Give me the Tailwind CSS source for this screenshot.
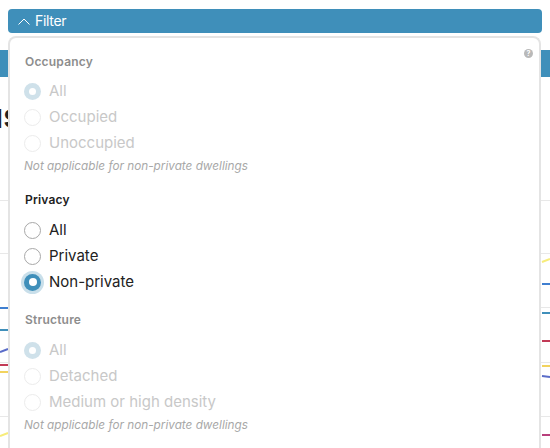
<!DOCTYPE html>
<html lang="en">
<head>
    <meta charset="UTF-8">
    <title>Filter</title>
    <script src="https://cdn.jsdelivr.net/npm/@tailwindcss/browser@4"></script>
</head>
<body class="bg-white font-['Inter',sans-serif] h-[448px] overflow-hidden relative">

    <!-- page behind the popover -->
    <div class="absolute left-0 right-0 top-[50px] h-[27px] bg-[#3f8fba]"></div>
    <div class="absolute left-[-18px] top-[96px] text-[34px] font-bold text-[#222] leading-10">us</div>
    <svg class="absolute left-0 top-0" width="550" height="448" fill="none" stroke-width="2">
        <g stroke="#e8e8e8" stroke-width="1">
            <path d="M0 200.500H550M0 253.500H550M0 307.500H550M0 362.500H550M0 416.500H550"/>
        </g>
        <path d="M0 308H8M542 284H550" stroke="#3f7fd0"/>
        <path d="M0 330H8M542 313H550" stroke="#3f8fba"/>
        <path d="M0 352L8 349M542 376L550 377" stroke="#5a6cc8"/>
        <path d="M0 365H8M542 341H550" stroke="#c23a56"/>
        <path d="M0 372H8M542 366H550" stroke="#f2d35e"/>
        <path d="M0 436L8 433M542 262L550 259" stroke="#f7ec7a"/>
        <path d="M542 435H550" stroke="#b83f7c"/>
    </svg>

    <!-- filter toggle -->
    <div class="relative mx-2 mt-[9px] h-6 w-[534px] rounded bg-[#3f8fba] flex items-center pl-2.5 gap-[5px] text-white text-sm tracking-[-0.3px]">
        <svg width="12" height="7" viewBox="0 0 12 7" fill="none" stroke="white" stroke-width="1"><path d="M0.500 6.500L6 1L11.500 6.500"/></svg>
        <span>Filter</span>
    </div>

    <!-- popover -->
    <div class="relative ml-2 mt-[3px] w-[533px] h-[430px] bg-white border-2 border-[#e4e4e4] border-b-0 rounded-t-lg pl-[14px] pt-4">
        <div class="absolute top-[11px] right-[6px] w-[9px] h-[9px] rounded-full bg-[#b9b9b9] text-white text-[7px] font-bold leading-[9px] text-center">?</div>

        <div>
            <h3 class="ml-px text-xs font-semibold leading-4 tracking-[0.2px] text-[#8d8d8d]">Occupancy</h3>
            <div class="mt-2 flex flex-col text-[15px] leading-[26px] text-[#c8c8c8]">
                <label class="flex items-center gap-2 h-[26px]"><span class="w-[17px] h-[17px] rounded-full bg-[#cfe1ea] flex items-center justify-center"><span class="w-[7px] h-[7px] rounded-full bg-white"></span></span>All</label>
                <label class="flex items-center gap-2 h-[26px]"><span class="w-[17px] h-[17px] rounded-full border border-[#ececec]"></span>Occupied</label>
                <label class="flex items-center gap-2 h-[26px]"><span class="w-[17px] h-[17px] rounded-full border border-[#ececec]"></span>Unoccupied</label>
            </div>
            <p class="mt-[2px] text-[11.75px] italic leading-4 text-[#a8a8a8]">Not applicable for non-private dwellings</p>
        </div>

        <div class="mt-[18px]">
            <h3 class="ml-px text-xs font-semibold leading-4 tracking-[0.2px] text-[#222]">Privacy</h3>
            <div class="mt-[9px] flex flex-col text-[15px] leading-[26px] text-[#222]">
                <label class="flex items-center gap-2 h-[26px]"><span class="w-[17px] h-[17px] rounded-full border border-[#a8a8a8]"></span>All</label>
                <label class="flex items-center gap-2 h-[26px]"><span class="w-[17px] h-[17px] rounded-full border border-[#a8a8a8]"></span>Private</label>
                <label class="flex items-center gap-2 h-[26px]"><span class="w-[17px] h-[17px] rounded-full bg-[#3f8fba] ring-[3px] ring-[#c9dfea] flex items-center justify-center"><span class="w-2 h-2 rounded-full bg-white"></span></span>Non-private</label>
            </div>
        </div>

        <div class="mt-[17px]">
            <h3 class="ml-px text-xs font-semibold leading-4 tracking-[0.2px] text-[#8d8d8d]">Structure</h3>
            <div class="mt-[9px] flex flex-col text-[15px] leading-[26px] text-[#c8c8c8]">
                <label class="flex items-center gap-2 h-[26px]"><span class="w-[17px] h-[17px] rounded-full bg-[#cfe1ea] flex items-center justify-center"><span class="w-[7px] h-[7px] rounded-full bg-white"></span></span>All</label>
                <label class="flex items-center gap-2 h-[26px]"><span class="w-[17px] h-[17px] rounded-full border border-[#ececec]"></span>Detached</label>
                <label class="flex items-center gap-2 h-[26px]"><span class="w-[17px] h-[17px] rounded-full border border-[#ececec]"></span>Medium or high density</label>
            </div>
            <p class="mt-[2px] text-[11.75px] italic leading-4 text-[#a8a8a8]">Not applicable for non-private dwellings</p>
        </div>
    </div>
</body>
</html>
